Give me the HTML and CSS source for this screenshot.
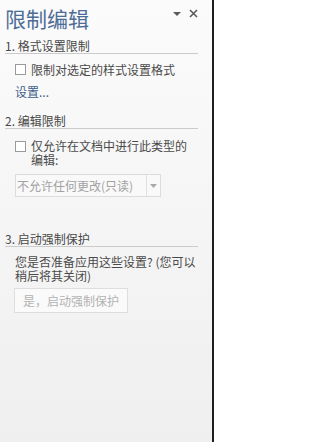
FILE: index.html
```html
<!DOCTYPE html>
<html lang="zh-CN">
<head>
<meta charset="utf-8">
<link rel="stylesheet" href="styles.css">
</head>
<body>
<div class="pane">
  <div class="header">
    <div class="title">限制编辑</div>
    <div class="tools">
      <svg class="menu-ico" width="8" height="4" viewBox="0 0 8 4"><path d="M0 0H8L4 4Z" fill="#5a5a5a"/></svg>
      <svg class="close-ico" width="9" height="9" viewBox="0 0 9 9"><path d="M1 1L8 8M8 1L1 8" stroke="#5a5a5a" stroke-width="1.6"/></svg>
    </div>
  </div>

  <div class="heading h1">1. 格式设置限制</div>
  <label class="check first">
    <span class="box"></span>
    <span class="label">限制对选定的样式设置格式</span>
  </label>
  <div class="link">设置...</div>

  <div class="heading h2">2. 编辑限制</div>
  <label class="check second">
    <span class="box"></span>
    <span class="label wrap">仅允许在文档中进行此类型的编辑:</span>
  </label>
  <div class="select">
    <span class="select-text">不允许任何更改(只读)</span>
    <span class="select-btn"><svg width="7" height="4" viewBox="0 0 7 4"><path d="M0 0H7L3.5 4Z" fill="#a8a8a8"/></svg></span>
  </div>

  <div class="heading h3">3. 启动强制保护</div>
  <p class="para">您是否准备应用这些设置? (您可以稍后将其关闭)</p>
  <div class="button">是，启动强制保护</div>
</div>
</body>
</html>
```

FILE: styles.css
```css
html, body {
  margin: 0;
  padding: 0;
}
body {
  width: 214px;
  height: 442px;
  overflow: hidden;
  font-family: "Noto Sans CJK SC", "Noto Sans", sans-serif;
  font-size: 12px;
  color: #4a4a4a;
}
.pane {
  box-sizing: border-box;
  width: 214px;
  height: 442px;
  border-right: 2px solid #1e1e1e;
  background: linear-gradient(#fbfbfb, #f5f5f5 50%, #efefef);
  display: flex;
  flex-direction: column;
}
.header {
  height: 36px;
  display: flex;
  justify-content: space-between;
  align-items: flex-start;
}
.title {
  margin: 5px 0 0 5px;
  font-size: 21px;
  line-height: 26px;
  color: #4d6d96;
}
.tools {
  display: flex;
  align-items: flex-start;
  gap: 8px;
  margin: 9px 14px 0 0;
}
.menu-ico {
  margin-top: 3px;
}
.heading {
  margin-left: 5px;
  width: 193px;
  line-height: 14px;
  border-bottom: 1px solid #cbcbcb;
  color: #484848;
}
.h1 { margin-top: 3px; }
.h2 { margin-top: 14px; }
.h3 { margin-top: 35px; }
.check {
  display: flex;
  align-items: flex-start;
  margin-left: 15px;
  gap: 5px;
  line-height: 16px;
}
.check.first { margin-top: 8px; }
.check.second { margin-top: 10px; line-height: 14px; }
.box {
  box-sizing: border-box;
  width: 11px;
  height: 11px;
  border: 1px solid #9a9a9a;
  background: #fff;
  margin-top: 2px;
  flex: none;
}
.wrap {
  width: 160px;
}
.link {
  margin: 6px 0 0 15px;
  line-height: 16px;
  color: #3f5f8c;
}
.select {
  box-sizing: border-box;
  margin: 7px 0 0 15px;
  width: 146px;
  height: 23px;
  border: 1px solid #dcdcdc;
  background: #f9f9f9;
  display: flex;
  align-items: stretch;
}
.select-text {
  flex: 1;
  padding-left: 1px;
  line-height: 21px;
  color: #a2a2a2;
}
.select-btn {
  width: 13px;
  border-left: 1px solid #e0e0e0;
  display: flex;
  align-items: center;
  justify-content: center;
}
.para {
  margin: 8px 0 0 15px;
  width: 190px;
  line-height: 14px;
}
.button {
  box-sizing: border-box;
  margin: 5px 0 0 14px;
  width: 114px;
  height: 25px;
  border: 1px solid #dedede;
  background: #fafafa;
  color: #b2b2b2;
  line-height: 23px;
  text-align: center;
}
```
